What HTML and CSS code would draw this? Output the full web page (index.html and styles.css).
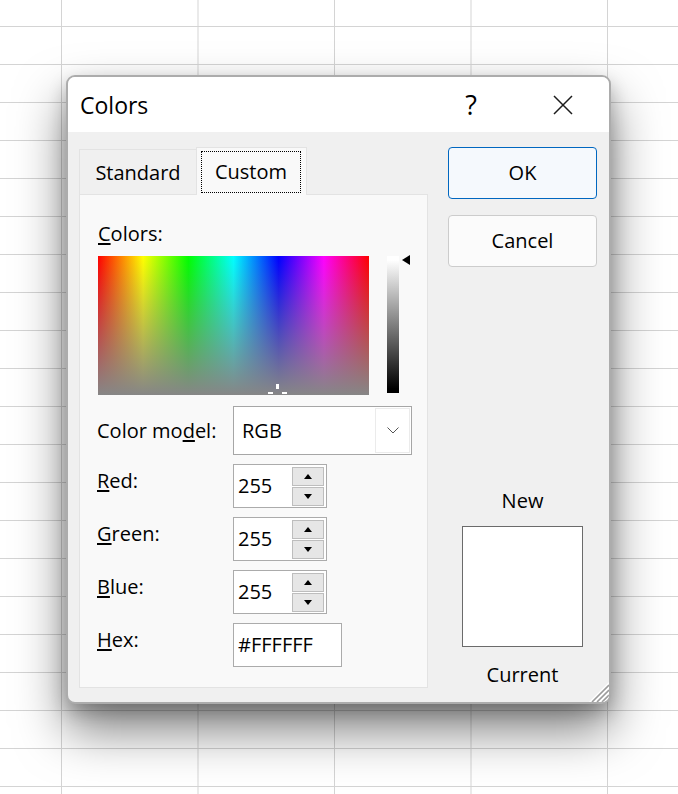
FILE: index.html
```html
<!DOCTYPE html>
<html lang="en">
<head>
    <meta charset="UTF-8">
    <meta name="viewport" content="width=device-width, initial-scale=1.0">
    <title>Colors</title>
    <link rel="stylesheet" href="styles.css">
</head>
<body>
    <div class="dialog">
        <div class="titlebar">
            <span class="title">Colors</span>
            <span class="titlebtn help">?</span>
            <span class="titlebtn close">
                <svg width="20" height="20" viewBox="0 0 20 20"><path d="M1 1 L19 19 M19 1 L1 19" stroke="#1c1c1c" stroke-width="1.5" fill="none"/></svg>
            </span>
        </div>
        <div class="content">
            <div class="left">
                <div class="tabstrip">
                    <div class="tab">Standard</div>
                    <div class="tab active"><span class="focus">Custom</span></div>
                </div>
                <div class="panel">
                    <div class="label"><u>C</u>olors:</div>
                    <div class="picker">
                        <div class="spectrum">
                            <span class="cross v"></span>
                            <span class="cross hl"></span>
                            <span class="cross hr"></span>
                        </div>
                        <div class="lum"></div>
                        <div class="lumarrow"></div>
                    </div>
                    <div class="fields">
                        <div class="flabel mid">Color mo<u>d</u>el:</div>
                        <div class="select">
                            <span class="val">RGB</span>
                            <span class="dd"><svg width="12" height="7" viewBox="0 0 12 7"><path d="M0.5 0.5 L6 6 L11.5 0.5" stroke="#555" stroke-width="1" fill="none"/></svg></span>
                        </div>
                        <div class="flabel"><u>R</u>ed:</div>
                        <div class="spin">
                            <span class="val">255</span>
                            <span class="arrows"><span class="sbtn"><i class="up"></i></span><span class="sbtn"><i class="down"></i></span></span>
                        </div>
                        <div class="flabel"><u>G</u>reen:</div>
                        <div class="spin">
                            <span class="val">255</span>
                            <span class="arrows"><span class="sbtn"><i class="up"></i></span><span class="sbtn"><i class="down"></i></span></span>
                        </div>
                        <div class="flabel"><u>B</u>lue:</div>
                        <div class="spin">
                            <span class="val">255</span>
                            <span class="arrows"><span class="sbtn"><i class="up"></i></span><span class="sbtn"><i class="down"></i></span></span>
                        </div>
                        <div class="flabel"><u>H</u>ex:</div>
                        <div class="hex">#FFFFFF</div>
                    </div>
                </div>
            </div>
            <div class="right">
                <div class="btn default">OK</div>
                <div class="btn cancel">Cancel</div>
                <div class="plabel new">New</div>
                <div class="swatch"></div>
                <div class="plabel current">Current</div>
            </div>
        </div>
        <svg class="grip" width="22" height="20" viewBox="0 0 22 20">
            <path d="M22 0 L22 20 L2 20 Z" fill="#fff"/>
            <path d="M22 3 L5 20 M22 8 L10 20 M22 13 L15 20" stroke="#9c9c9c" stroke-width="1.6"/>
        </svg>
    </div>
</body>
</html>
```

FILE: styles.css
```css
body {
    margin: 0;
    min-height: 794px;
    overflow: hidden;
    background-color: #fff;
    background-image: linear-gradient(to right, #d4d4d4 1px, transparent 1px),
        linear-gradient(to bottom, #d4d4d4 1px, transparent 1px);
    background-size: 136.5px 38px;
    background-position: 61px 26px;
    font-family: "Open Sans", "Noto Sans", sans-serif;
    font-size: 20px;
    line-height: 28px;
    color: #000;
}
u {
    text-decoration-thickness: 2px;
    text-underline-offset: 2px;
}
.dialog {
    position: relative;
    box-sizing: border-box;
    width: 545px;
    height: 629px;
    margin: 75px 0 0 66px;
    border: 2px solid #acacac;
    border-radius: 9px;
    background: #f0f0f0;
    overflow: hidden;
    box-shadow: 0 26px 50px rgba(0, 0, 0, 0.5), 0 8px 18px rgba(0, 0, 0, 0.22);
}
.titlebar {
    display: flex;
    align-items: center;
    height: 55px;
    background: #fff;
}
.title {
    margin-left: 12px;
    font-size: 23px;
    line-height: 32px;
}
.titlebtn {
    display: flex;
    align-items: center;
    justify-content: center;
    width: 92px;
    height: 55px;
}
.help {
    margin-left: auto;
    font-size: 27px;
}
.content {
    display: flex;
    gap: 20px;
    padding: 15px 12px 0 11px;
}
.left {
    width: 349px;
}
.tabstrip {
    display: flex;
    align-items: flex-end;
    height: 47px;
}
.tab {
    box-sizing: border-box;
    width: 118px;
    height: 45px;
    padding-top: 9px;
    border: 1px solid #e3e3e3;
    border-bottom: none;
    background: #f0f0f0;
    text-align: center;
}
.tab.active {
    position: relative;
    z-index: 1;
    width: 111px;
    height: 48px;
    margin: 0 0 -1px -1px;
    padding-top: 3px;
    background: #f9f9f9;
}
.focus {
    display: block;
    box-sizing: border-box;
    width: 100px;
    height: 42px;
    margin-left: 4px;
    padding-top: 6px;
    border: 1px dotted #000;
}
.panel {
    box-sizing: border-box;
    height: 494px;
    padding: 25px 0 0 17px;
    border: 1px solid #e3e3e3;
    background: #f9f9f9;
}
.label {
    margin-left: 1px;
}
.picker {
    display: flex;
    align-items: flex-start;
    margin-top: 8px;
}
.spectrum {
    position: relative;
    width: 271px;
    height: 139px;
    margin-left: 1px;
    background: linear-gradient(to bottom, rgba(134, 134, 134, 0), #868686),
        linear-gradient(to right, #f00 0%, #ff0 16.67%, #0f0 33.33%, #0ff 50%, #00f 66.67%, #f0f 83.33%, #f00 100%);
}
.cross {
    position: absolute;
    background: #fff;
}
.cross.v {
    left: 178px;
    top: 128px;
    width: 3px;
    height: 5px;
}
.cross.hl {
    left: 170px;
    top: 136px;
    width: 5px;
    height: 2px;
}
.cross.hr {
    left: 184px;
    top: 136px;
    width: 5px;
    height: 2px;
}
.lum {
    width: 12px;
    height: 137px;
    margin-left: 18px;
    background: linear-gradient(to bottom, #fff 3%, #000 97%);
}
.lumarrow {
    width: 0;
    height: 0;
    margin: -1px 0 0 3px;
    border-top: 5px solid transparent;
    border-bottom: 5px solid transparent;
    border-right: 8px solid #000;
}
.fields {
    display: grid;
    grid-template-columns: 136px auto;
    row-gap: 9px;
    margin-top: 11px;
    justify-items: start;
}
.flabel {
    padding-top: 3px;
}
.flabel.mid {
    align-self: center;
    padding-top: 1px;
}
.select {
    box-sizing: border-box;
    display: flex;
    align-items: center;
    width: 179px;
    height: 49px;
    border: 1px solid #a6a6a6;
    background: #fff;
}
.select .val {
    flex: 1;
    padding-left: 8px;
}
.dd {
    box-sizing: border-box;
    display: flex;
    align-items: center;
    justify-content: center;
    width: 35px;
    height: 45px;
    margin-right: 1px;
    border: 1px solid #ebebeb;
}
.spin {
    box-sizing: border-box;
    display: flex;
    align-items: center;
    width: 94px;
    height: 44px;
    border: 1px solid #ababab;
    background: #fff;
}
.spin .val {
    flex: 1;
    padding-left: 4px;
}
.arrows {
    display: flex;
    flex-direction: column;
    gap: 1px;
    margin-right: 2px;
}
.sbtn {
    box-sizing: border-box;
    display: flex;
    align-items: center;
    justify-content: center;
    width: 32px;
    height: 19px;
    border: 1px solid #bdbdbd;
    background: #e6e6e6;
}
.up {
    border-left: 4px solid transparent;
    border-right: 4px solid transparent;
    border-bottom: 5px solid #000;
}
.down {
    border-left: 4px solid transparent;
    border-right: 4px solid transparent;
    border-top: 5px solid #000;
}
.hex {
    box-sizing: border-box;
    width: 109px;
    height: 44px;
    padding: 7px 0 0 4px;
    border: 1px solid #ababab;
    background: #fff;
}
.right {
    display: flex;
    flex-direction: column;
    align-items: center;
    width: 149px;
}
.btn {
    box-sizing: border-box;
    width: 149px;
    height: 52px;
    padding-top: 11px;
    border: 1px solid #cccccc;
    border-radius: 4px;
    background: #fbfbfb;
    text-align: center;
}
.btn.default {
    border-color: #0067c0;
    background: #f5f9fd;
}
.btn.cancel {
    margin-top: 16px;
}
.plabel.new {
    margin-top: 220px;
}
.swatch {
    box-sizing: border-box;
    width: 121px;
    height: 121px;
    margin-top: 11px;
    border: 1px solid #6b6b6b;
    background: #fff;
}
.plabel.current {
    margin-top: 14px;
}
.grip {
    position: absolute;
    right: 0;
    bottom: 0;
}
```
